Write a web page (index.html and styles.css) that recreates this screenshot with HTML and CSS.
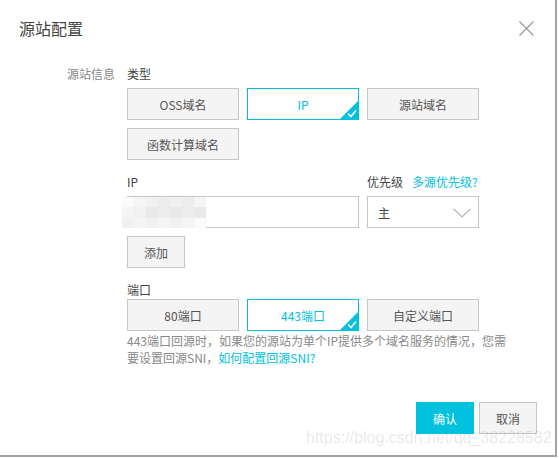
FILE: index.html
```html
<!DOCTYPE html>
<html lang="zh-CN">
<head>
<meta charset="utf-8">
<title>源站配置</title>
<link rel="stylesheet" href="styles.css">
</head>
<body>
<div class="dialog">
  <div class="header">
    <div class="title">源站配置</div>
    <svg class="close" width="15" height="15" viewBox="0 0 15 15"><path d="M0.5 0.5L14.5 14.5M14.5 0.5L0.5 14.5" stroke="#9a9a9a" stroke-width="1.3" fill="none"/></svg>
  </div>
  <div class="form">
    <div class="form-label">源站信息</div>
    <div class="content">
      <div class="field-label">类型</div>
      <div class="btn-grid">
        <button class="opt">OSS域名</button>
        <button class="opt selected">IP<svg class="check" width="20" height="20" viewBox="0 0 20 20"><path d="M20 0L20 20L0 20Z" fill="#00c1de"/><path d="M9 13.5L12 16.5L17 10.5" stroke="#fff" stroke-width="1.6" fill="none"/></svg></button>
        <button class="opt">源站域名</button>
        <button class="opt">函数计算域名</button>
      </div>
      <div class="ip-row">
        <div class="ip-col">
          <div class="field-label">IP</div>
          <div class="input">
            <div class="mosaic">
              <i class="m0"></i><i class="m1"></i><i class="m2"></i><i class="m3"></i><i class="m2"></i><i class="m3"></i><i class="m1"></i>
              <i class="m1"></i><i class="m2"></i><i class="m4"></i><i class="m3"></i><i class="m4"></i><i class="m3"></i><i class="m4"></i>
              <i class="m2"></i><i class="m1"></i><i class="m2"></i><i class="m1"></i><i class="m2"></i><i class="m1"></i><i class="m0"></i>
            </div>
          </div>
        </div>
        <div class="pri-col">
          <div class="field-label">优先级<a class="link">多源优先级?</a></div>
          <div class="select">
            <span>主</span>
            <svg class="chev" width="18" height="10" viewBox="0 0 18 10"><path d="M0.5 0.8L9 8.8L17.5 0.8" stroke="#a8a8a8" stroke-width="1.1" fill="none"/></svg>
          </div>
        </div>
      </div>
      <button class="opt add">添加</button>
      <div class="field-label port-label">端口</div>
      <div class="btn-grid">
        <button class="opt">80端口</button>
        <button class="opt selected">443端口<svg class="check" width="20" height="20" viewBox="0 0 20 20"><path d="M20 0L20 20L0 20Z" fill="#00c1de"/><path d="M9 13.5L12 16.5L17 10.5" stroke="#fff" stroke-width="1.6" fill="none"/></svg></button>
        <button class="opt">自定义端口</button>
      </div>
      <div class="help">
        <div class="help-line">443端口回源时，如果您的源站为单个IP提供多个域名服务的情况，您需</div>
        <div class="help-line">要设置回源SNI，<a class="link">如何配置回源SNI?</a></div>
      </div>
    </div>
  </div>
  <div class="footer">
    <button class="primary">确认</button>
    <button class="opt cancel">取消</button>
  </div>
  <div class="watermark">https://blog.csdn.net/qq_38228582</div>
</div>
</body>
</html>
```
FILE: styles.css
```css
* { box-sizing: border-box; }
html, body { margin: 0; padding: 0; background: #fff; }
body {
  font-family: "Noto Sans CJK SC", "Liberation Sans", sans-serif;
  font-weight: 400;
  color: #333;
}
.dialog {
  position: relative;
  width: 557px;
  height: 457px;
  background: #fff;
  border-right: 2px solid #a4a4a4;
  border-bottom: 2px solid #a4a4a4;
  display: flex;
  flex-direction: column;
}
.header {
  display: flex;
  justify-content: space-between;
  align-items: center;
  padding: 16px 21px 0 19px;
}
.title {
  font-size: 16px;
  line-height: 24px;
  color: #444;
}
.close { display: block; }
.form {
  display: flex;
  margin-top: 25px;
  padding-left: 67px;
}
.form-label {
  width: 48px;
  margin-right: 12px;
  font-size: 12px;
  line-height: 18px;
  color: #888;
}
.content {
  width: 380px;
  display: flex;
  flex-direction: column;
  align-items: flex-start;
}
.field-label {
  font-size: 12px;
  line-height: 18px;
  color: #444;
  white-space: nowrap;
}
.btn-grid {
  display: grid;
  grid-template-columns: repeat(3, 112px);
  gap: 8px;
  margin-top: 5px;
}
.opt {
  position: relative;
  height: 32px;
  width: 112px;
  border: 1px solid #c6c6c6;
  background: #f4f4f4;
  color: #555;
  font-family: inherit;
  font-weight: 400;
  font-size: 12px;
  padding: 0;
  margin: 0;
  overflow: hidden;
}
.opt.selected {
  border-color: #00c1de;
  background: #fff;
  color: #00c1de;
}
.check {
  position: absolute;
  right: -1px;
  bottom: -1px;
  display: block;
}
.ip-row {
  display: flex;
  gap: 8px;
  margin-top: 13px;
}
.ip-col { width: 232px; }
.pri-col { width: 112px; }
.link {
  color: #00c1de;
  margin-left: 9px;
  text-decoration: none;
}
.help .link { margin-left: 0; }
.input, .select {
  position: relative;
  margin-top: 5px;
  height: 32px;
  border: 1px solid #c6c6c6;
  background: #fff;
}
.mosaic {
  position: absolute;
  left: -6px;
  top: 0;
  width: 84px;
  height: 31px;
  display: grid;
  grid-template-columns: repeat(7, 12px);
  grid-template-rows: repeat(3, 1fr);
}
.mosaic i { display: block; }
.m0 { background: #fbfbfb; }
.m1 { background: #f5f5f5; }
.m2 { background: #f1f1f1; }
.m3 { background: #ededed; }
.m4 { background: #e9e9e9; }
.select {
  display: flex;
  align-items: center;
  justify-content: space-between;
  padding: 0 7px 0 10px;
  font-size: 12px;
  color: #444;
}
.chev { display: block; margin-top: 2px; }
.add {
  width: 58px;
  margin-top: 8px;
}
.port-label { margin-top: 13px; }
.port-label + .btn-grid { margin-top: 0; }
.help {
  margin-top: 1px;
  font-size: 12px;
  line-height: 17px;
  color: #888;
}
.help-line { white-space: nowrap; }
.footer {
  margin-top: auto;
  display: flex;
  justify-content: flex-end;
  gap: 5px;
  padding: 0 18px 21px 0;
}
.primary {
  width: 58px;
  height: 32px;
  border: none;
  background: #00c1de;
  color: #fff;
  font-family: inherit;
  font-size: 12px;
  padding: 0;
  margin: 0;
}
.cancel { width: 58px; }
.watermark {
  position: absolute;
  left: 306px;
  top: 429px;
  font-family: "Liberation Sans", sans-serif;
  font-size: 16px;
  line-height: 18px;
  color: rgba(110, 110, 110, 0.16);
  white-space: nowrap;
  pointer-events: none;
}
```
